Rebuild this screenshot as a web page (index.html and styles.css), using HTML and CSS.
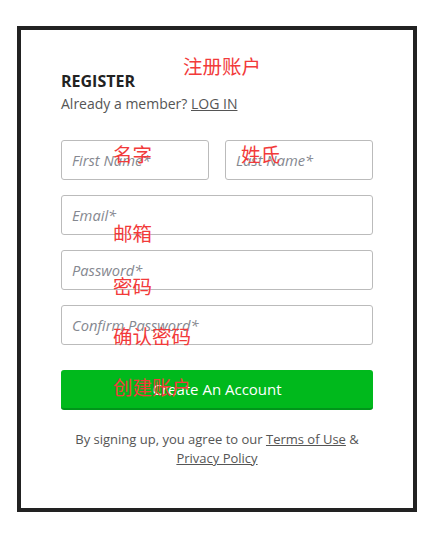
FILE: index.html
```html
<!DOCTYPE html>
<html lang="zh-CN">

<head>
    <meta charset="utf-8">
    <link rel="stylesheet" href="styles.css">
</head>

<body>
    <div class="register-card">
        <h2 class="register-title">REGISTER</h2>
        <p class="register-sub">Already a member? <a href="#">LOG IN</a></p>

        <form class="register-form">
            <div class="form-row">
                <input type="text" placeholder="First Name*">
                <input type="text" placeholder="Last Name*">
            </div>
            <input type="email" placeholder="Email*">
            <input type="password" placeholder="Password*">
            <input type="password" placeholder="Confirm Password*">
            <button type="submit" class="register-btn">Create An Account</button>
        </form>

        <p class="register-terms">By signing up, you agree to our <a href="#">Terms of Use</a> &amp;<br><a href="#">Privacy Policy</a></p>

        <!-- annotations -->
        <span class="note note-title">注册账户</span>
        <span class="note note-first">名字</span>
        <span class="note note-last">姓氏</span>
        <span class="note note-email">邮箱</span>
        <span class="note note-pass">密码</span>
        <span class="note note-confirm">确认密码</span>
        <span class="note note-btn">创建账户</span>
    </div>
</body>

</html>
```

FILE: styles.css
```css
body {
    font-family: "Open Sans", "Noto Sans", sans-serif;
    margin: 0;
    padding: 0;
    background-color: white;
}

.register-card {
    position: relative;
    box-sizing: border-box;
    width: 400px;
    height: 486px;
    margin: 26px 0 0 17px;
    padding: 40px;
    border: 4px solid #222;
    background-color: white;
}

.register-title {
    margin: 0;
    font-size: 16px;
    line-height: 22px;
    font-weight: 700;
    color: #222;
}

.register-sub {
    margin: 2px 0 0;
    font-size: 14px;
    line-height: 20px;
    color: #555;
}

.register-sub a,
.register-terms a {
    color: #555;
    text-decoration: underline;
}

.register-form {
    display: flex;
    flex-direction: column;
    gap: 15px;
    margin-top: 26px;
}

.form-row {
    display: flex;
    gap: 16px;
}

.form-row input {
    flex: 1;
    min-width: 0;
}

.register-form input {
    box-sizing: border-box;
    height: 40px;
    padding: 0 10px;
    border: 1px solid #bbb;
    border-radius: 3px;
    font-family: inherit;
    font-size: 14.7px;
    color: #333;
}

.register-form input::placeholder {
    font-style: italic;
    color: #858890;
}

.register-btn {
    box-sizing: border-box;
    height: 40px;
    margin-top: 10px;
    border: none;
    border-bottom: 2px solid #00961a;
    border-radius: 3px;
    background-color: #00b91c;
    color: white;
    font-family: inherit;
    font-size: 15px;
    cursor: pointer;
}

.register-terms {
    margin: 20px 0 0;
    font-size: 13px;
    line-height: 19px;
    text-align: center;
    color: #555;
}

.note {
    position: absolute;
    font-family: "Noto Sans CJK SC", sans-serif;
    font-size: 19.5px;
    line-height: 1;
    color: #f23a3a;
    white-space: nowrap;
}

.note-title { left: 162px; top: 26px; }
.note-first { left: 92px; top: 114px; }
.note-last { left: 220px; top: 114px; }
.note-email { left: 92px; top: 193px; }
.note-pass { left: 92px; top: 246px; }
.note-confirm { left: 92px; top: 296px; }
.note-btn { left: 92px; top: 347px; }
```
